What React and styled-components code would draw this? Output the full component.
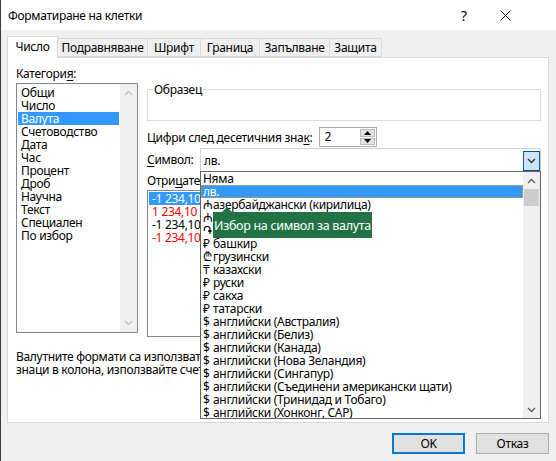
import React from "react";
import styled, { createGlobalStyle } from "styled-components";

const GlobalStyle = createGlobalStyle`
  html, body {
    margin: 0;
    padding: 0;
    background: #f0f0f0;
  }
  body {
    font-family: "Noto Sans", "Open Sans", "DejaVu Sans", sans-serif;
    font-size: 12px;
    letter-spacing: -0.3px;
    color: #000;
  }
  u {
    text-underline-offset: 2px;
  }
`;

const categories = [
  "Общи",
  "Число",
  "Валута",
  "Счетоводство",
  "Дата",
  "Час",
  "Процент",
  "Дроб",
  "Научна",
  "Текст",
  "Специален",
  "По избор",
];

const negatives = [
  { text: "-1 234,10 лв.", red: false },
  { text: "1 234,10 лв.", red: true },
  { text: "-1 234,10 лв.", red: false },
  { text: "-1 234,10 лв.", red: true },
];

const symbols = [
  { sym: "", name: "Няма" },
  { sym: "", name: "лв." },
  { sym: "₼", name: "азербайджански (кирилица)" },
  { sym: "₼", name: "азербайджански (латиница)" },
  { sym: "֏", name: "арменски" },
  { sym: "₽", name: "башкир" },
  { sym: "₾", name: "грузински" },
  { sym: "₸", name: "казахски" },
  { sym: "₽", name: "руски" },
  { sym: "₽", name: "сакха" },
  { sym: "₽", name: "татарски" },
  { sym: "$", name: "английски (Австралия)" },
  { sym: "$", name: "английски (Белиз)" },
  { sym: "$", name: "английски (Канада)" },
  { sym: "$", name: "английски (Нова Зеландия)" },
  { sym: "$", name: "английски (Сингапур)" },
  { sym: "$", name: "английски (Съединени американски щати)" },
  { sym: "$", name: "английски (Тринидад и Тобаго)" },
  { sym: "$", name: "английски (Хонконг, САР)" },
];

const tabs = [
  { label: "Число", width: 51 },
  { label: "Подравняване", width: 90 },
  { label: "Шрифт", width: 53 },
  { label: "Граница", width: 59 },
  { label: "Запълване", width: 70 },
  { label: "Защита", width: 52 },
];

function Chevron({ up, color = "#606060" }) {
  return (
    <svg width="9" height="6" viewBox="0 0 9 6">
      <path
        d={up ? "M1 5 L4.5 1.5 L8 5" : "M1 1 L4.5 4.5 L8 1"}
        fill="none"
        stroke={color}
        strokeWidth="1.4"
      />
    </svg>
  );
}

export default function App() {
  return (
    <>
      <GlobalStyle />
      <Window>
        <TitleBar>
          <Title>Форматиране на клетки</Title>
          <Help>?</Help>
          <CloseBtn>
            <svg width="11" height="11" viewBox="0 0 11 11">
              <path d="M0.5 0.5 L10.5 10.5 M10.5 0.5 L0.5 10.5" stroke="#111" strokeWidth="1" />
            </svg>
          </CloseBtn>
        </TitleBar>

        <Body>
          <TabRow>
            {tabs.map((t, i) => (
              <Tab key={t.label} $active={i === 0} $w={t.width}>
                {t.label}
              </Tab>
            ))}
          </TabRow>

          <Panel>
            <LeftCol>
              <Label>
                Категори<u>я</u>:
              </Label>
              <CategoryList>
                <ListItems>
                  {categories.map((c) => (
                    <CatItem key={c} $selected={c === "Валута"}>
                      {c}
                    </CatItem>
                  ))}
                </ListItems>
                <DisabledScroll>
                  <Chevron up color="#c2c2c2" />
                  <Chevron color="#c2c2c2" />
                </DisabledScroll>
              </CategoryList>
            </LeftCol>

            <RightCol>
              <SampleGroup>
                <Legend>Образец</Legend>
              </SampleGroup>

              <DigitsRow>
                <span>
                  Цифри след десетичния зна<u>к</u>:
                </span>
                <Spinner>
                  <SpinValue>2</SpinValue>
                  <SpinButtons>
                    <SpinBtn>
                      <svg width="7" height="4" viewBox="0 0 7 4">
                        <path d="M0 4 L3.5 0 L7 4 Z" fill="#000" />
                      </svg>
                    </SpinBtn>
                    <SpinBtn>
                      <svg width="7" height="4" viewBox="0 0 7 4">
                        <path d="M0 0 L3.5 4 L7 0 Z" fill="#000" />
                      </svg>
                    </SpinBtn>
                  </SpinButtons>
                </Spinner>
              </DigitsRow>

              <SymbolRow>
                <SymbolLabel>
                  <u>С</u>имвол:
                </SymbolLabel>
                <ComboWrap>
                  <Combo>
                    <ComboValue>лв.</ComboValue>
                    <ComboButton>
                      <Chevron color="#333" />
                    </ComboButton>
                  </Combo>

                  <DropList>
                    <DropItems>
                      {symbols.map((s, i) => (
                        <DropItem key={i} $selected={i === 1}>
                          {s.sym && <Sym>{s.sym}</Sym>}
                          {s.name}
                        </DropItem>
                      ))}
                    </DropItems>
                    <DropScroll>
                      <ScrollArrow>
                        <Chevron up />
                      </ScrollArrow>
                      <Thumb />
                      <ScrollFill />
                      <ScrollArrow>
                        <Chevron />
                      </ScrollArrow>
                    </DropScroll>

                    <Tooltip>Избор на символ за валута</Tooltip>
                  </DropList>
                </ComboWrap>
              </SymbolRow>

              <NegLabel>
                Отри<u>ц</u>ателни числа:
              </NegLabel>
              <NegList>
                {negatives.map((n, i) => (
                  <NegItem key={i} $red={n.red} $selected={i === 0}>
                    {n.text}
                  </NegItem>
                ))}
              </NegList>
            </RightCol>

            <Description>
              Валутните формати са използват за общи парични стойности. За да подравните десетичните
              <br />
              знаци в колона, използвайте счетоводния формат.
            </Description>
          </Panel>

          <Footer>
            <Button $primary>OK</Button>
            <Button>Отказ</Button>
          </Footer>
        </Body>
      </Window>
    </>
  );
}

const Window = styled.div`
  width: 556px;
  height: 461px;
  box-sizing: border-box;
  border-left: 1px solid #3a3a3a;
  display: flex;
  flex-direction: column;
  overflow: hidden;
`;

const TitleBar = styled.div`
  height: 30px;
  background: #fff;
  display: flex;
  align-items: center;
  padding-left: 7px;
`;

const Title = styled.div`
  flex: 1;
`;

const Help = styled.div`
  width: 30px;
  text-align: center;
  font-size: 14px;
  margin-right: 6px;
`;

const CloseBtn = styled.div`
  width: 40px;
  display: flex;
  justify-content: center;
  margin-right: 31px;
`;

const Body = styled.div`
  flex: 1;
  padding: 6px 7px 0 6px;
  display: flex;
  flex-direction: column;
`;

const TabRow = styled.div`
  display: flex;
  align-items: flex-end;
  height: 21px;
  position: relative;
  z-index: 1;
`;

const Tab = styled.div`
  box-sizing: border-box;
  width: ${(p) => p.$w}px;
  height: ${(p) => (p.$active ? "22px" : "19px")};
  margin-bottom: ${(p) => (p.$active ? "-1px" : "0")};
  border: 1px solid #d9d9d9;
  border-bottom: ${(p) => (p.$active ? "none" : "1px solid #d9d9d9")};
  border-left: ${(p) => (p.$active ? "1px solid #d9d9d9" : "none")};
  background: ${(p) => (p.$active ? "#fff" : "#f0f0f0")};
  display: flex;
  align-items: center;
  justify-content: center;
  padding-bottom: ${(p) => (p.$active ? "2px" : "0")};
  white-space: nowrap;
  line-height: 1;
`;

const Panel = styled.div`
  height: 366px;
  box-sizing: border-box;
  border: 1px solid #d9d9d9;
  background: #fff;
  display: grid;
  grid-template-columns: 122px 394px;
  grid-template-rows: auto 1fr;
  column-gap: 9px;
  padding: 8px 6px 0 8px;
`;

const LeftCol = styled.div`
  display: flex;
  flex-direction: column;
`;

const Label = styled.div`
  line-height: 16px;
  height: 16px;
  margin-bottom: 1px;
`;

const CategoryList = styled.div`
  height: 250px;
  box-sizing: border-box;
  border: 1px solid #828790;
  display: flex;
`;

const ListItems = styled.div`
  flex: 1;
  padding: 2px 1px;
`;

const CatItem = styled.div`
  height: 13px;
  line-height: 13px;
  padding-left: 3px;
  background: ${(p) => (p.$selected ? "#3399ff" : "transparent")};
  color: ${(p) => (p.$selected ? "#fff" : "#000")};
`;

const DisabledScroll = styled.div`
  width: 17px;
  background: #f0f0f0;
  display: flex;
  flex-direction: column;
  justify-content: space-between;
  align-items: center;
  padding: 6px 0 6px;
`;

const RightCol = styled.div`
  display: flex;
  flex-direction: column;
  padding-top: 23px;
`;

const SampleGroup = styled.div`
  height: 32px;
  box-sizing: border-box;
  border: 1px solid #dcdcdc;
  position: relative;
`;

const Legend = styled.span`
  position: absolute;
  top: -8px;
  left: 5px;
  background: #fff;
  padding: 0 1px;
  line-height: 16px;
`;

const DigitsRow = styled.div`
  display: flex;
  align-items: center;
  margin-top: 6px;
  height: 20px;
  gap: 7px;
`;

const Spinner = styled.div`
  width: 58px;
  height: 20px;
  box-sizing: border-box;
  border: 1px solid #adadad;
  display: flex;
`;

const SpinValue = styled.div`
  flex: 1;
  padding-left: 4px;
  line-height: 18px;
`;

const SpinButtons = styled.div`
  width: 15px;
  display: flex;
  flex-direction: column;
  gap: 1px;
  padding: 1px 1px 1px 0;
`;

const SpinBtn = styled.div`
  flex: 1;
  background: #e1e1e1;
  border: 1px solid #bcbcbc;
  display: flex;
  align-items: center;
  justify-content: center;
`;

const SymbolRow = styled.div`
  display: flex;
  align-items: center;
  margin-top: 1px;
  height: 23px;
`;

const SymbolLabel = styled.span`
  width: 53px;
`;

const ComboWrap = styled.div`
  flex: 1;
  height: 23px;
  position: relative;
`;

const Combo = styled.div`
  height: 23px;
  box-sizing: border-box;
  border: 1px solid #d0d0d0;
  border-bottom: none;
  background: #fff;
  display: flex;
  align-items: center;
`;

const ComboValue = styled.div`
  flex: 1;
  padding-left: 3px;
`;

const ComboButton = styled.div`
  width: 17px;
  height: 20px;
  box-sizing: border-box;
  margin-top: 1px;
  border: 1px solid #005499;
  background: #cce4f7;
  display: flex;
  align-items: center;
  justify-content: center;
`;

const DropList = styled.div`
  position: absolute;
  top: 23px;
  left: 0;
  right: 0;
  height: 248px;
  box-sizing: border-box;
  border: 1px solid #646464;
  background: #fff;
  display: flex;
  z-index: 5;
`;

const DropItems = styled.div`
  flex: 1;
  overflow: hidden;
`;

const DropItem = styled.div`
  height: 13px;
  line-height: 13px;
  padding-left: 2px;
  white-space: nowrap;
  box-sizing: border-box;
  background: ${(p) => (p.$selected ? "#3399ff" : "transparent")};
  color: ${(p) => (p.$selected ? "#fff" : "#000")};
  outline: ${(p) => (p.$selected ? "1px dotted #e8a23c" : "none")};
  outline-offset: -1px;
`;

const Sym = styled.span`
  display: inline-block;
  width: 10px;
  font-family: "Noto Sans", "DejaVu Sans", sans-serif;
  font-size: 12px;
`;

const DropScroll = styled.div`
  width: 17px;
  background: #f0f0f0;
  display: flex;
  flex-direction: column;
`;

const ScrollArrow = styled.div`
  height: 17px;
  display: flex;
  align-items: center;
  justify-content: center;
`;

const Thumb = styled.div`
  height: 17px;
  margin: 0 1px;
  background: #cdcdcd;
`;

const ScrollFill = styled.div`
  flex: 1;
`;

const Tooltip = styled.div`
  position: absolute;
  left: 12px;
  top: 40px;
  width: 159px;
  height: 26px;
  box-sizing: border-box;
  background: #217346;
  color: #fff;
  font-size: 12.5px;
  white-space: nowrap;
  display: flex;
  align-items: center;
  justify-content: center;
  &::before {
    content: "";
    position: absolute;
    left: 9px;
    top: -5px;
    border-left: 5px solid transparent;
    border-right: 5px solid transparent;
    border-bottom: 5px solid #217346;
  }
`;

const NegLabel = styled.div`
  margin-top: 2px;
  line-height: 16px;
  height: 16px;
  margin-bottom: 1px;
`;

const NegList = styled.div`
  height: 147px;
  box-sizing: border-box;
  border: 1px solid #828790;
  padding: 1px;
`;

const NegItem = styled.div`
  height: 13px;
  line-height: 13px;
  padding-left: 3px;
  background: ${(p) => (p.$selected ? "#3399ff" : "transparent")};
  color: ${(p) => (p.$selected ? "#fff" : p.$red ? "#ff0000" : "#000")};
`;

const Description = styled.div`
  grid-column: 1 / 3;
  margin-top: 13px;
  line-height: 13px;
  white-space: nowrap;
`;

const Footer = styled.div`
  display: flex;
  justify-content: flex-end;
  gap: 11px;
  padding-top: 10px;
`;

const Button = styled.div`
  width: 73px;
  height: 21px;
  box-sizing: border-box;
  background: #e1e1e1;
  border: ${(p) => (p.$primary ? "2px solid #0078d7" : "1px solid #adadad")};
  display: flex;
  align-items: center;
  justify-content: center;
`;
